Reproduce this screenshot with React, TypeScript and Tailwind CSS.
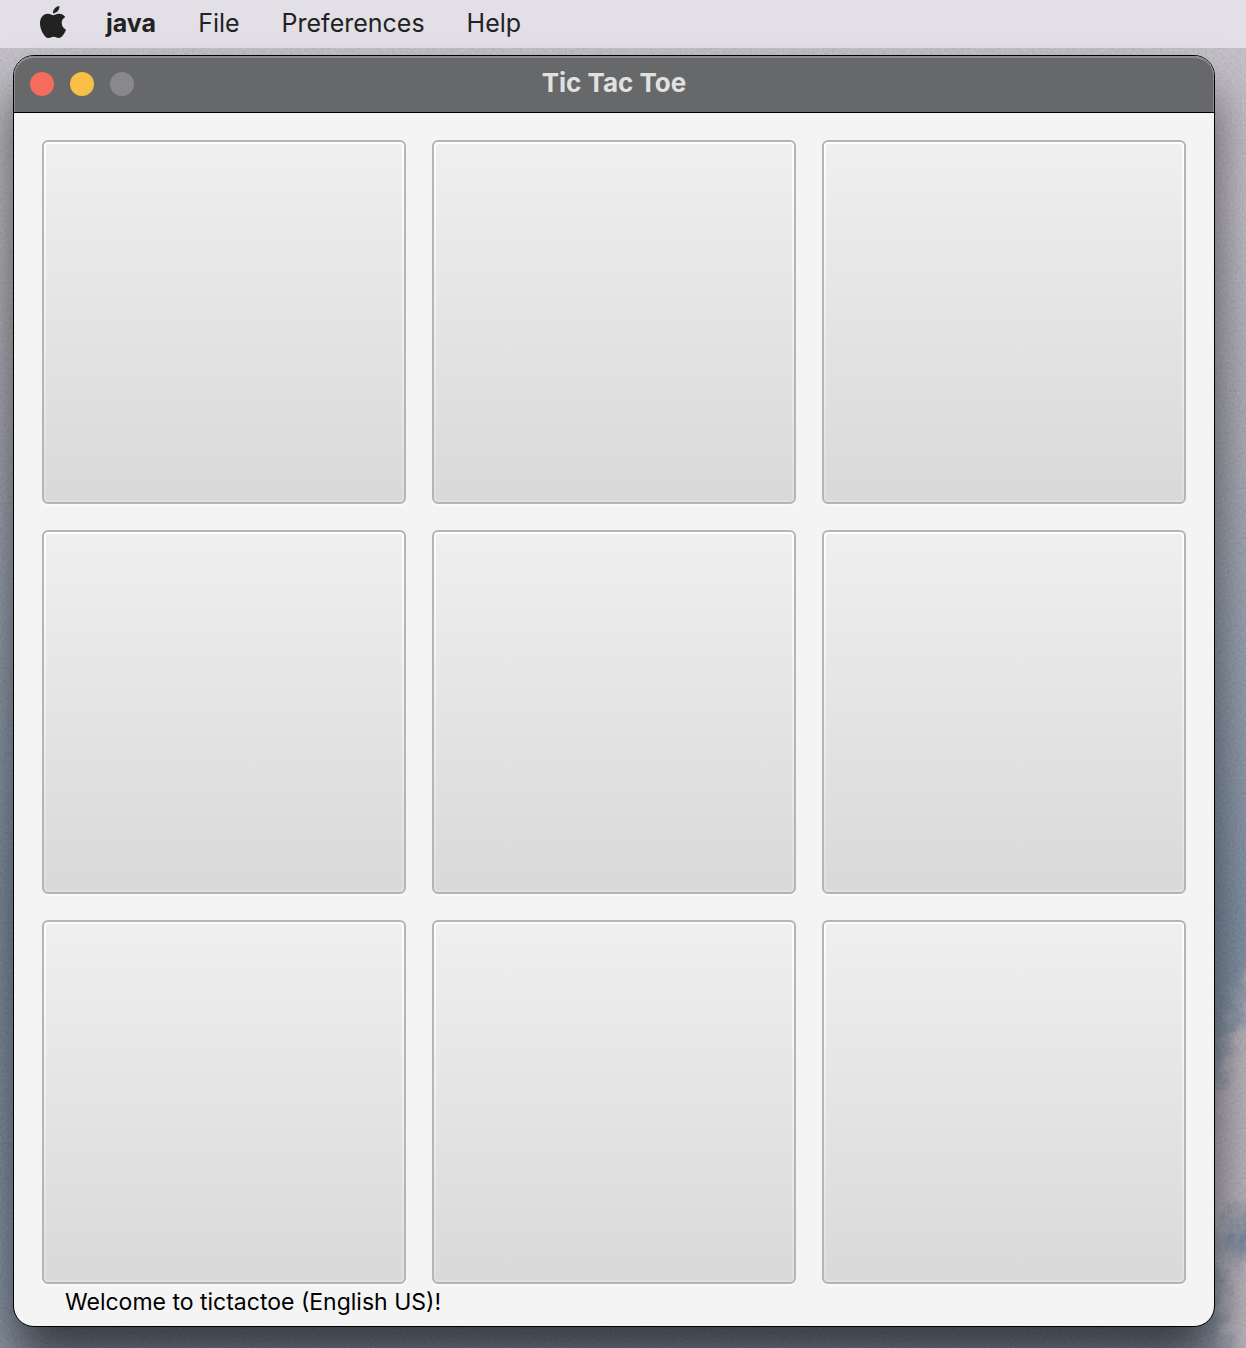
import { useState } from "react";
import { SiApple } from "react-icons/si";

const menus = ["File", "Preferences", "Help"];

function Wallpaper() {
  return (
    <svg
      className="absolute inset-0 h-full w-full"
      viewBox="0 0 1246 1348"
      preserveAspectRatio="none"
      aria-hidden="true"
    >
      <defs>
        <linearGradient id="sky" x1="0" y1="0" x2="0" y2="1">
          <stop offset="0" stopColor="#c4c0ca" />
          <stop offset="0.15" stopColor="#c0bcc6" />
          <stop offset="0.32" stopColor="#a9a9b6" />
          <stop offset="0.45" stopColor="#919cae" />
          <stop offset="0.68" stopColor="#73869e" />
          <stop offset="0.85" stopColor="#78899f" />
          <stop offset="1" stopColor="#8491a5" />
        </linearGradient>
        <filter id="grain" x="0" y="0" width="100%" height="100%">
          <feTurbulence type="fractalNoise" baseFrequency="0.4" numOctaves="2" seed="4" />
          <feColorMatrix type="saturate" values="0" />
          <feComponentTransfer>
            <feFuncA type="linear" slope="0" intercept="0.2" />
          </feComponentTransfer>
        </filter>
        <filter id="cloud" x="-100%" y="-10%" width="300%" height="120%">
          <feTurbulence type="fractalNoise" baseFrequency="0.06" numOctaves="5" seed="7" result="n" />
          <feGaussianBlur in="SourceGraphic" stdDeviation="9" result="b" />
          <feDisplacementMap in="b" in2="n" scale="30" xChannelSelector="R" yChannelSelector="G" />
        </filter>
      </defs>
      <rect width="1246" height="1348" fill="url(#sky)" />
      <g filter="url(#cloud)">
        <path d="M1290 930 L1246 985 L1226 1060 L1205 1110 L1195 1180 L1212 1240 L1225 1290 L1226 1348 L1290 1370 Z" fill="#b8b0bb" />
        <path d="M1275 1190 L1240 1205 L1222 1245 L1236 1262 L1275 1245 Z" fill="#668098" />
      </g>
      <rect width="1246" height="1348" filter="url(#grain)" />
    </svg>
  );
}

function MenuBar() {
  return (
    <nav className="relative flex h-12 items-center bg-[#e2dfe6] pb-0.5 pl-[37px] text-[25px] leading-8 text-[#222222]">
      <button type="button" aria-label="Apple menu" className="mr-[37px] pb-0.5">
        <SiApple size={32} />
      </button>
      <div className="flex gap-[42px]">
        <button type="button" className="font-bold">
          java
        </button>
        {menus.map((menu) => (
          <button key={menu} type="button">
            {menu}
          </button>
        ))}
      </div>
    </nav>
  );
}

function TitleBar() {
  return (
    <header className="grid h-[57px] grid-cols-[1fr_auto_1fr] items-center rounded-t-[20px] border-b border-black bg-[#666869] px-4 shadow-[inset_1px_0_0_#8b8d8d,inset_-1px_0_0_#8b8d8d,inset_0_2px_0_#8b8d8d]">
      <div className="flex gap-4">
        <button type="button" aria-label="Close" className="size-6 rounded-full bg-[#f46c5d]" />
        <button type="button" aria-label="Minimize" className="size-6 rounded-full bg-[#f8c145]" />
        <button type="button" aria-label="Zoom" disabled className="size-6 rounded-full bg-[#89898b]" />
      </div>
      <h1 className="pb-0.5 text-[26px] leading-8 font-bold text-[#e1e1e2]">Tic Tac Toe</h1>
    </header>
  );
}

export default function App() {
  const [cells, setCells] = useState<string[]>(Array(9).fill(""));

  const play = (index: number) => {
    if (cells[index]) return;
    const mark = cells.filter(Boolean).length % 2 === 0 ? "X" : "O";
    setCells(cells.map((cell, i) => (i === index ? mark : cell)));
  };

  return (
    <div className="relative flex min-h-screen flex-col overflow-hidden font-['Inter',sans-serif]">
      <Wallpaper />
      <MenuBar />
      <div className="relative pt-[7px] pr-[31px] pb-[21px] pl-[13px]">
        <main className="rounded-[21px] border border-black bg-[#f4f4f4] shadow-[0_36px_50px_rgba(0,0,0,0.6)]">
          <TitleBar />
          <div className="grid grid-cols-3 gap-[26px] px-7 pt-[27px]">
            {cells.map((cell, i) => (
              <button
                key={i}
                type="button"
                aria-label={`Cell ${i + 1}`}
                onClick={() => play(i)}
                className="aspect-square rounded-[6px] border-2 border-[#b5b5b5] bg-linear-to-b from-white to-[#dfdfdf] p-0.5 text-9xl shadow-[0_2px_0_#fafafa]"
              >
                <span className="flex h-full w-full items-center justify-center rounded-[2px] bg-linear-to-b from-[#efefef] to-[#d9d9d9]">
                  {cell}
                </span>
              </button>
            ))}
          </div>
          <p className="px-[51px] pt-0.5 pb-2 text-[23px] leading-8 text-black">
            Welcome to tictactoe (English US)!
          </p>
        </main>
      </div>
    </div>
  );
}
